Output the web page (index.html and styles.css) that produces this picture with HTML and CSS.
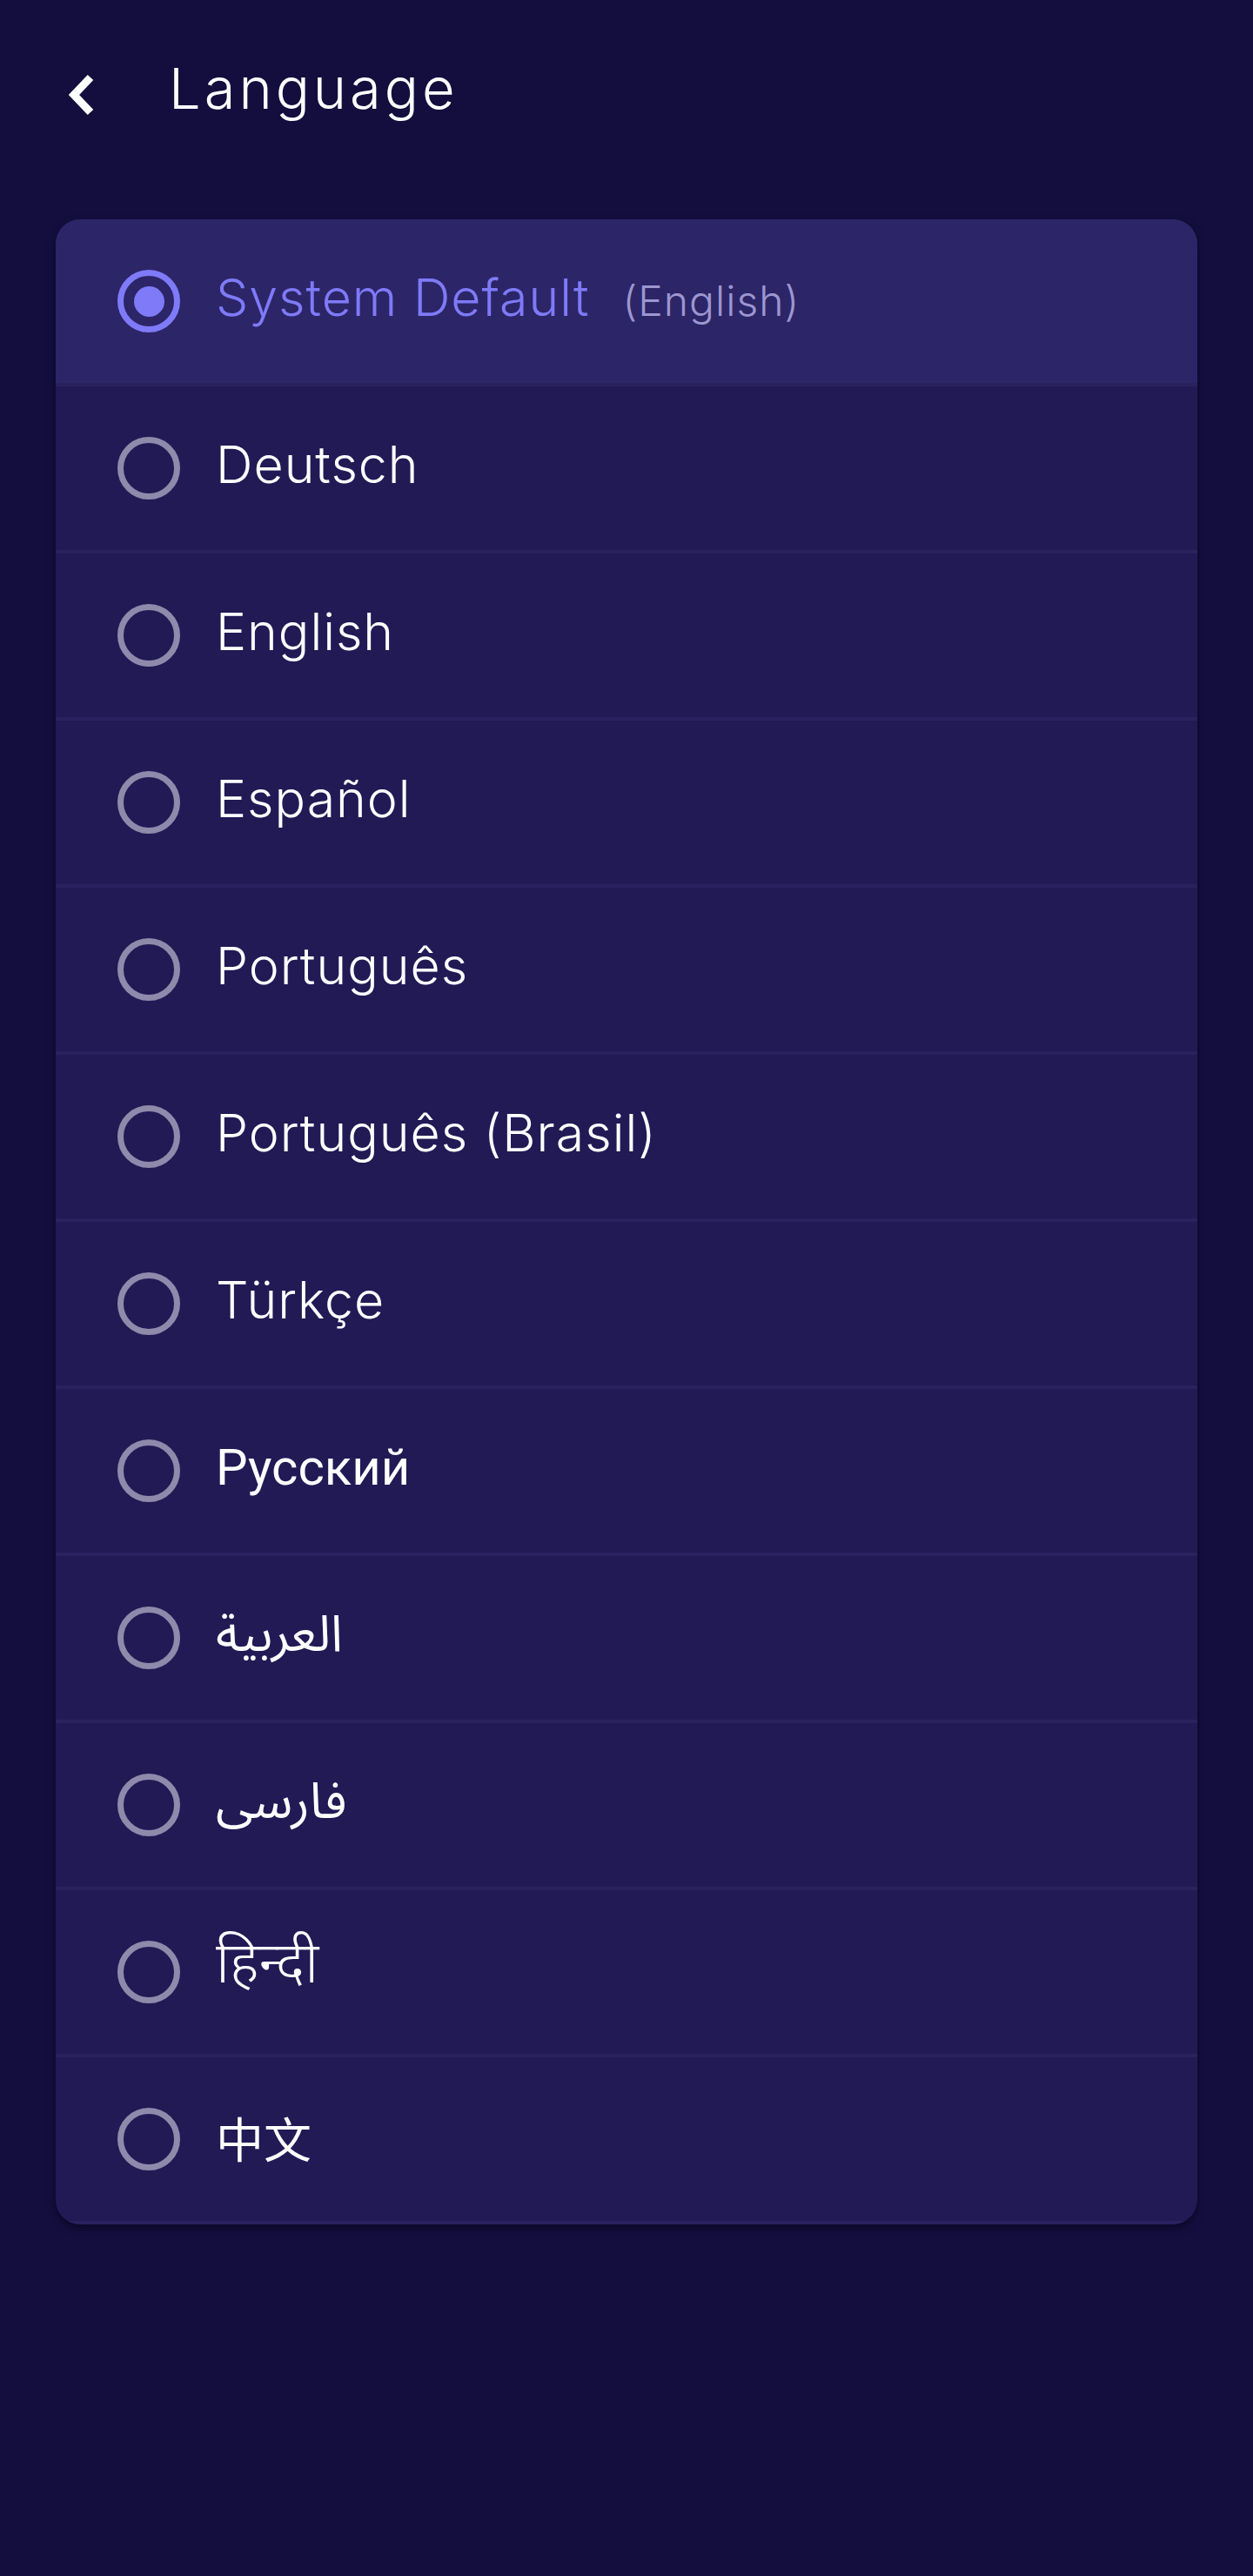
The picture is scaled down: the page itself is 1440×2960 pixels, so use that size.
FILE: index.html
```
<!DOCTYPE html>
<html lang="en">
<head>
<meta charset="utf-8">
<title>Language</title>
<link rel="stylesheet" href="styles.css">
</head>
<body>
<header class="header">
  <span class="back" aria-label="Back">
    <svg width="34" height="50" viewBox="0 0 34 50"><polyline points="28,5 9,25 28,45" fill="none" stroke="#ffffff" stroke-width="9"/></svg>
  </span>
  <h1 class="title">Language</h1>
</header>
<main class="card">
  <div class="row selected"><span class="radio on"><span class="dot"></span></span><span class="label">System Default<span class="sub">(English)</span></span></div>
  <div class="row"><span class="radio"></span><span class="label">Deutsch</span></div>
  <div class="row"><span class="radio"></span><span class="label">English</span></div>
  <div class="row"><span class="radio"></span><span class="label">Español</span></div>
  <div class="row"><span class="radio"></span><span class="label">Português</span></div>
  <div class="row"><span class="radio"></span><span class="label">Português (Brasil)</span></div>
  <div class="row"><span class="radio"></span><span class="label">Türkçe</span></div>
  <div class="row"><span class="radio"></span><span class="label ru">Русский</span></div>
  <div class="row"><span class="radio"></span><span class="label ar">العربية</span></div>
  <div class="row"><span class="radio"></span><span class="label ar">فارسی</span></div>
  <div class="row"><span class="radio"></span><span class="label hi">हिन्दी</span></div>
  <div class="row"><span class="radio"></span><span class="label zh">中文</span></div>
</main>
</body>
</html>
```
FILE: styles.css
```
html, body {
  margin: 0;
  padding: 0;
}
body {
  background: #140e3e;
  font-family: Inter, "Noto Sans", sans-serif;
  color: #ffffff;
  min-height: 2960px;
}
.header {
  display: flex;
  align-items: center;
  height: 212px;
  padding-left: 76px;
}
.back {
  display: flex;
  width: 34px;
  height: 50px;
  margin-top: 5px;
}
.title {
  margin: 0 0 10px 84px;
  font-size: 65px;
  font-weight: 300;
  letter-spacing: 4px;
  line-height: 1;
}
.card {
  margin: 40px 64px 0;
  background: #211a55;
  border-radius: 28px;
  overflow: hidden;
  box-shadow: 0 4px 10px rgba(5, 2, 20, 0.55);
}
.row {
  display: flex;
  align-items: center;
  height: 188px;
  border-bottom: 4px solid #2a225f;
  padding-left: 71px;
}
.row.selected {
  background: #2c2567;
}
.radio {
  box-sizing: border-box;
  width: 72px;
  height: 72px;
  border: 7px solid #8f8aab;
  border-radius: 50%;
  flex: none;
  display: flex;
  align-items: center;
  justify-content: center;
}
.radio.on {
  border-color: #7e7af8;
}
.dot {
  width: 35px;
  height: 35px;
  border-radius: 50%;
  background: #7e7af8;
}
.label {
  margin: 0 0 7px 41px;
  font-size: 59px;
  font-weight: 350;
  letter-spacing: 1px;
  line-height: 1.2;
  white-space: nowrap;
}
.selected .label {
  color: #7e7af8;
}
.sub {
  margin-left: 38px;
  font-size: 48px;
  letter-spacing: 1px;
  color: #9d96d0;
}
.ru {
  font-family: Roboto, "Liberation Sans", sans-serif;
  font-weight: 400;
  letter-spacing: 0;
  font-size: 58px;
}
.ar {
  font-family: "Noto Sans Arabic", "Noto Naskh Arabic", "DejaVu Sans", sans-serif;
  font-weight: 400;
  letter-spacing: 0;
  font-size: 58px;
}
.hi {
  font-family: "Noto Sans Devanagari", "Lohit Devanagari", "Noto Sans", sans-serif;
  font-weight: 300;
  letter-spacing: 0;
  font-size: 66px;
}
.zh {
  font-family: "Noto Sans CJK SC", sans-serif;
  font-weight: 400;
  letter-spacing: 0;
  font-size: 55px;
}
```
